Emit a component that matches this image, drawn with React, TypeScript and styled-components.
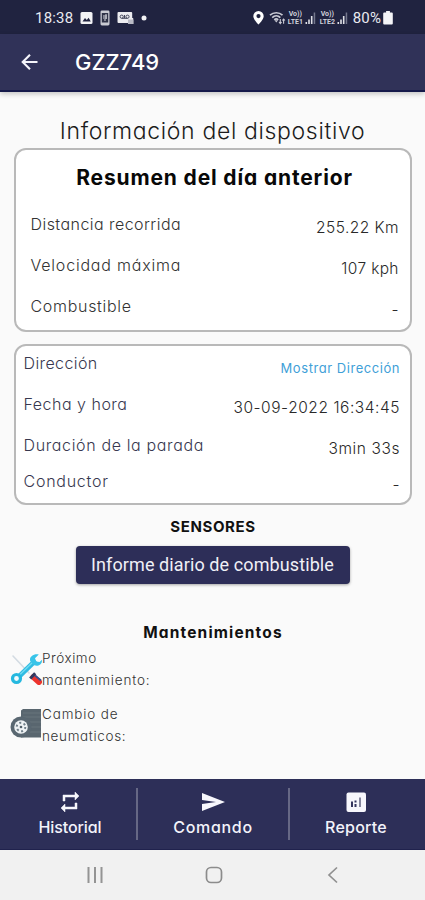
import React from "react";
import styled, { createGlobalStyle } from "styled-components";

const GlobalStyle = createGlobalStyle`
  * { box-sizing: border-box; }
  html, body { margin: 0; padding: 0; background: #fafafa; }
  body {
    font-family: Inter, "Open Sans", sans-serif;
    font-feature-settings: "cv11" 1;
    overflow: hidden;
  }
`;

const Screen = styled.div`
  width: 425px;
  height: 900px;
  display: flex;
  flex-direction: column;
  background: #fafafa;
`;

const StatusBar = styled.header`
  height: 34px;
  flex: none;
  display: flex;
  align-items: center;
  justify-content: space-between;
  padding: 1px 32px 0 35px;
  background: #202340;
  color: #e9eaf0;
  font: 400 15px/18px Roboto, sans-serif;
`;

const StatusGroup = styled.div<{ $gap: number }>`
  display: flex;
  align-items: center;
  gap: ${(p) => p.$gap}px;
`;

const StatusText = styled.span<{ $spacing: number }>`
  letter-spacing: ${(p) => p.$spacing}px;
`;

const Lte = styled.span`
  width: 17px;
  display: flex;
  flex-direction: column;
  align-items: center;
  font: 700 7px/8px Roboto, sans-serif;
  white-space: nowrap;
  color: #cfd0da;
`;

const AppBar = styled.div`
  height: 58px;
  flex: none;
  display: flex;
  align-items: center;
  gap: 37px;
  padding: 2px 21px 2px;
  background: #303258;
  border-bottom: 2px solid #15194a;
  box-shadow: 0 2px 5px rgba(0, 0, 0, 0.22);
  color: #fff;
`;

const PlateTitle = styled.h1`
  margin: 0;
  font-size: 22px;
  font-weight: 500;
  line-height: 28px;
`;

const Content = styled.main`
  flex: 1;
  display: flex;
  flex-direction: column;
  align-items: center;
  padding-top: 26px;
`;

const Heading = styled.h2`
  margin: 0 0 3px;
  font-size: 23px;
  font-weight: 300;
  line-height: 27px;
  letter-spacing: 0.65px;
  color: #1c1c1c;
  white-space: nowrap;
`;

const Card = styled.section<{ $height: number; $pad: string }>`
  width: 398px;
  height: ${(p) => p.$height}px;
  margin-bottom: 12px;
  padding: ${(p) => p.$pad};
  border: 2px solid #b9b9b9;
  border-radius: 12px;
  background: #fff;
`;

const CardTitle = styled.h3`
  margin: 0 0 23px;
  font-size: 21px;
  font-weight: 700;
  line-height: 26px;
  letter-spacing: 0.85px;
  text-align: center;
  color: #080808;
  white-space: nowrap;
`;

const Row = styled.div<{ $height: number }>`
  height: ${(p) => p.$height}px;
  display: flex;
  justify-content: space-between;
  align-items: flex-start;
  white-space: nowrap;
`;

const Label = styled.span<{ $navy?: boolean; $spacing: number }>`
  font-size: 16px;
  font-weight: ${(p) => (p.$navy ? 350 : 300)};
  line-height: 20px;
  letter-spacing: ${(p) => p.$spacing}px;
  color: ${(p) => (p.$navy ? "#38384f" : "#333")};
`;

const Value = styled.span<{ $spacing: number; $link?: boolean }>`
  margin-top: ${(p) => (p.$link ? 5 : 4)}px;
  margin-right: ${(p) => -p.$spacing}px;
  font-size: ${(p) => (p.$link ? 13 : 15.5)}px;
  font-weight: ${(p) => (p.$link ? 400 : 300)};
  line-height: 20px;
  letter-spacing: ${(p) => p.$spacing}px;
  color: ${(p) => (p.$link ? "#3f9fd8" : "#292929")};
`;

const SectionTitle = styled.h4<{ $size: number; $spacing: number }>`
  margin: 0;
  padding-left: 1px;
  font-size: ${(p) => p.$size}px;
  font-weight: 650;
  line-height: 20px;
  letter-spacing: ${(p) => p.$spacing}px;
  color: #111;
`;

const ReportButton = styled.button`
  width: 274px;
  height: 38px;
  margin: 9px 0 39px;
  padding: 0;
  border: 0;
  border-radius: 4px;
  background: #2d2e58;
  box-shadow: 0 1px 3px rgba(0, 0, 0, 0.35);
  color: #f0f0f6;
  font: 400 18px/38px Roboto, sans-serif;
  letter-spacing: 0.1px;
  white-space: nowrap;
`;

const MaintenanceList = styled.ul`
  width: 100%;
  margin: 4px 0 0;
  padding: 0 0 0 10px;
  list-style: none;
`;

const MaintenanceItem = styled.li`
  height: 56px;
  display: flex;
  align-items: flex-start;
  svg { margin-top: 6px; flex: none; }
`;

const MaintenanceText = styled.span`
  display: flex;
  flex-direction: column;
  font-size: 13.5px;
  font-weight: 350;
  line-height: 22px;
  color: #333;
`;

const Line = styled.span<{ $spacing: number }>`
  letter-spacing: ${(p) => p.$spacing}px;
`;

const BottomNav = styled.nav`
  height: 71px;
  flex: none;
  display: grid;
  grid-template-columns: 136px 2px 150px 2px 135px;
  align-items: center;
  background: #2d2f58;
  border-bottom: 1px solid #20224d;
`;

const NavItem = styled.a<{ $spacing: number; $shift?: number }>`
  display: flex;
  flex-direction: column;
  align-items: center;
  gap: 2px;
  padding-bottom: 1px;
  padding-left: ${(p) => Math.max(p.$shift ?? 0, 0)}px;
  padding-right: ${(p) => Math.max(-(p.$shift ?? 0), 0)}px;
  font-size: 16px;
  font-weight: 500;
  line-height: 22px;
  letter-spacing: ${(p) => p.$spacing}px;
  color: #f3f3fa;
`;

const Divider = styled.span`
  width: 2px;
  height: 52px;
  background: #666885;
`;

const SystemBar = styled.footer`
  height: 50px;
  flex: none;
  display: grid;
  grid-template-columns: 190px 48px 190px;
  justify-content: center;
  align-items: center;
  justify-items: center;
  padding-left: 3px;
  background: #f1f1f1;
`;

const PictureIcon = () => (
  <svg width="13" height="12" viewBox="0 0 13 12">
    <rect x=".5" width="12" height="12" rx="1.5" fill="#f2f2f5" />
    <path d="M2.5 9.5 5 6l1.8 2.1L8.6 5.8l2.2 3.7z" fill="#202340" />
  </svg>
);

const PhoneIcon = () => (
  <svg width="10" height="16" viewBox="0 0 10 16">
    <rect x=".5" y=".5" width="9" height="15" rx="1.4" fill="#c9cad2" />
    <rect x="1.8" y="3" width="6.4" height="9.5" fill="#303348" />
    <path d="M3 6h4M3 8h4M4 10h2M6 4v5" stroke="#d4d5dc" strokeWidth="1" />
  </svg>
);

const VoicemailIcon = () => (
  <svg width="17" height="14" viewBox="0 0 17 14">
    <path d="M1.5 1h12.7a1 1 0 0 1 1 1v5h1v6h-5v-1H1.5a1 1 0 0 1-1-1V2a1 1 0 0 1 1-1z" fill="#ececf0" />
    <g fill="none" stroke="#44475c" strokeWidth="1">
      <circle cx="4.7" cy="5.7" r="1.6" />
      <circle cx="10.5" cy="5.7" r="1.6" />
      <path d="M4.7 7.3h5.8M7.5 4v3" />
    </g>
    <path d="M11 8.5h5.5V13H11z" fill="#b9bac5" />
  </svg>
);

const DotIcon = () => (
  <svg width="6" height="6" viewBox="0 0 6 6"><circle cx="3" cy="3" r="2.5" fill="#f2f2f5" /></svg>
);

const PinIcon = () => (
  <svg width="11" height="14" viewBox="0 0 11 14">
    <path fillRule="evenodd" d="M5.5 0A5.2 5.2 0 0 0 .3 5.2C.3 8.6 5.5 13.5 5.5 13.5s5.2-4.9 5.2-8.3A5.2 5.2 0 0 0 5.5 0zm0 3a2.1 2.1 0 1 1 0 4.2 2.1 2.1 0 0 1 0-4.2z" fill="#fff" />
  </svg>
);

const WifiIcon = () => (
  <svg width="17" height="14" viewBox="0 0 17 14" fill="none" stroke="#c9cad4">
    <path d="M1 4.200c3.500-3.300 9-3.300 12.500 0M3.200 6.600c2.300-2.200 5.800-2.200 8.100 0M5.300 8.800c1.100-1.100 2.800-1.100 3.900 0" strokeWidth="1.7" />
    <path d="M5.5 9.300h3.600L7.300 11.500z" fill="#c9cad4" stroke="none" />
    <path d="M11.300 8v4.500M10 11l1.300 1.600L12.600 11M14.600 12.700V8M13.300 9.500 14.600 8l1.300 1.500" strokeWidth="1.1" />
  </svg>
);

const SignalIcon = () => (
  <svg width="11" height="13" viewBox="0 0 11 13">
    <path d="M.5 11h1.6v2H.5zM3.2 8.5h1.6V13H3.2z" fill="#dfe0e6" />
    <path d="M5.9 5h1.6v8H5.9z" fill="#dfe0e6" />
    <path d="M8.7 1.500h1.500V13H8.700z" fill="#74778c" />
  </svg>
);

const BatteryIcon = () => (
  <svg width="10" height="14" viewBox="0 0 10 14">
    <path d="M3.1 0h3.8v1.500h1.900a1 1 0 0 1 1 1V12.500a1 1 0 0 1-1 1H1.200a1 1 0 0 1-1-1v-10a1 1 0 0 1 1-1h1.900z" fill="#f4f4f7" />
  </svg>
);

const BackArrow = () => (
  <svg width="17" height="18" viewBox="0 0 17 18" fill="none" stroke="#f4f4fa" strokeWidth="2.1">
    <path d="M16.500 9H2M9 1.700 1.700 9 9 16.300" />
  </svg>
);

const ToolsIcon = () => (
  <svg width="32" height="32" viewBox="0 0 32 32">
    <path d="m3 3 16 17" stroke="#d3dbe2" strokeWidth="1.6" strokeLinecap="round" />
    <path d="M8.500 24 25.500 7.500" stroke="#31bce2" strokeWidth="5" />
    <path d="m10 21.500 13-12.500" stroke="#72dcf2" strokeWidth="1.3" />
    <circle cx="6.5" cy="25.5" r="4" fill="#f4fbfd" stroke="#25b8df" strokeWidth="3.2" />
    <path d="M28.800 1.500 25 5.200l1.300 3.200 3.300.5 2.400-2.200c.3 5-4.200 7-7.700 5.500l-4-4C18.800 4.500 23 .3 28.800 1.500z" fill="#38c4e9" />
    <path d="m23.500 24 5.500 5" stroke="#ed332d" strokeWidth="6" strokeLinecap="round" />
    <path d="m20.200 25.500 5-5.200" stroke="#30395f" strokeWidth="3" />
    <path d="m25 22.500 6 5" stroke="#34508f" strokeWidth="1.8" />
  </svg>
);

const TireIcon = () => (
  <svg width="32" height="30" viewBox="0 0 32 30">
    <path d="M11 1.500 13 0h18v28.500H11z" fill="#59666f" />
    <path d="M13 4h18M13 8h18M20 13h11M21 18h10M20 23h11" stroke="#69757d" strokeWidth="1.2" />
    <circle cx="11" cy="18" r="10.5" fill="#596771" />
    <circle cx="11" cy="18" r="6.8" fill="#eef2f4" />
    <circle cx="11" cy="18" r="4.3" fill="none" stroke="#71808a" strokeWidth="2" strokeDasharray="2 2.5" />
    <circle cx="11" cy="18" r="1.3" fill="#53616b" />
  </svg>
);

const RepeatIcon = () => (
  <svg width="24" height="24" viewBox="0 0 24 24" fill="#f7f7fc">
    <path d="M7 7h10v3l4-4-4-4v3H5v6h2V7zm10 10H7v-3l-4 4 4 4v-3h12v-6h-2v4z" stroke="#f7f7fc" strokeWidth=".5" />
  </svg>
);

const SendIcon = () => (
  <svg width="24" height="24" viewBox="0 0 24 24" fill="#f7f7fc">
    <path d="M1 21 24 12 1 3v7l14 2-14 2z" />
  </svg>
);

const ChartIcon = () => (
  <svg width="24" height="24" viewBox="0 0 24 24">
    <rect x="2.5" y="2.5" width="19.5" height="19.5" rx="2" fill="#f7f7fc" />
    <path d="M7 11.500h2V17H7zM10.500 14h2v3h-2zM10.500 10.500h2v2h-2z" fill="#35365e" />
    <path d="M15 7.500h2V17h-2z" fill="#85869d" />
  </svg>
);

const RecentsIcon = () => (
  <svg width="18" height="18" viewBox="0 0 18 18" stroke="#949494" strokeWidth="2"><path d="M2.500 1v16M9 1v16M15.500 1v16" /></svg>
);

const HomeIcon = () => (
  <svg width="18" height="18" viewBox="0 0 18 18"><rect x="1.5" y="1.5" width="15" height="15" rx="4.5" fill="none" stroke="#8c8c8c" strokeWidth="1.7" /></svg>
);

const BackIcon = () => (
  <svg width="12" height="18" viewBox="0 0 12 18" fill="none" stroke="#909090" strokeWidth="1.7"><path d="M10 1.500 2 9l8 7.500" /></svg>
);

export default function App() {
  return (
    <>
      <GlobalStyle />
      <Screen>
        <StatusBar>
          <StatusGroup $gap={7}>
            <StatusText $spacing={0.2}>18:38</StatusText>
            <PictureIcon />
            <PhoneIcon />
            <VoicemailIcon />
            <DotIcon />
          </StatusGroup>
          <StatusGroup $gap={5}>
            <PinIcon />
            <StatusGroup $gap={3}>
              <StatusGroup $gap={1}><WifiIcon /><Lte><span>Vo))</span><span>LTE1</span></Lte><SignalIcon /></StatusGroup>
              <StatusGroup $gap={1}><Lte><span>Vo))</span><span>LTE2</span></Lte><SignalIcon /></StatusGroup>
            </StatusGroup>
            <StatusGroup $gap={2}><StatusText $spacing={0.1}>80%</StatusText><BatteryIcon /></StatusGroup>
          </StatusGroup>
        </StatusBar>
        <AppBar>
          <BackArrow />
          <PlateTitle>GZZ749</PlateTitle>
        </AppBar>
        <Content>
          <Heading>Información del dispositivo</Heading>
          <Card $height={184} $pad="15px 11px 0 15px">
            <CardTitle>Resumen del día anterior</CardTitle>
            <Row $height={41}><Label $spacing={0.45}>Distancia recorrida</Label><Value $spacing={0.45}>255.22 Km</Value></Row>
            <Row $height={41}><Label $spacing={0.8}>Velocidad máxima</Label><Value $spacing={0.35}>107 kph</Value></Row>
            <Row $height={41}><Label $spacing={0.7}>Combustible</Label><Value $spacing={0}>-</Value></Row>
          </Card>
          <Card $height={161} $pad="7px 10px 0 8px">
            <Row $height={41}><Label $navy $spacing={0.4}>Dirección</Label><Value $link $spacing={0.55}>Mostrar Dirección</Value></Row>
            <Row $height={41}><Label $navy $spacing={0.5}>Fecha y hora</Label><Value $spacing={0.55}>30-09-2022 16:34:45</Value></Row>
            <Row $height={36}><Label $navy $spacing={0.64}>Duración de la parada</Label><Value $spacing={0.6}>3min 33s</Value></Row>
            <Row $height={30}><Label $navy $spacing={0.75}>Conductor</Label><Value $spacing={0}>-</Value></Row>
          </Card>
          <SectionTitle $size={15} $spacing={0.6}>SENSORES</SectionTitle>
          <ReportButton>Informe diario de combustible</ReportButton>
          <SectionTitle $size={15.5} $spacing={1.15}>Mantenimientos</SectionTitle>
          <MaintenanceList>
            <MaintenanceItem>
              <ToolsIcon />
              <MaintenanceText><Line $spacing={0.55}>Próximo</Line><Line $spacing={0.8}>mantenimiento:</Line></MaintenanceText>
            </MaintenanceItem>
            <MaintenanceItem>
              <TireIcon />
              <MaintenanceText><Line $spacing={0.85}>Cambio de</Line><Line $spacing={0.65}>neumaticos:</Line></MaintenanceText>
            </MaintenanceItem>
          </MaintenanceList>
        </Content>
        <BottomNav>
          <NavItem $spacing={-0.1} $shift={4}><RepeatIcon />Historial</NavItem>
          <Divider />
          <NavItem $spacing={0.7}><SendIcon />Comando</NavItem>
          <Divider />
          <NavItem $spacing={0.25} $shift={-3}><ChartIcon />Reporte</NavItem>
        </BottomNav>
        <SystemBar>
          <RecentsIcon />
          <HomeIcon />
          <BackIcon />
        </SystemBar>
      </Screen>
    </>
  );
}
